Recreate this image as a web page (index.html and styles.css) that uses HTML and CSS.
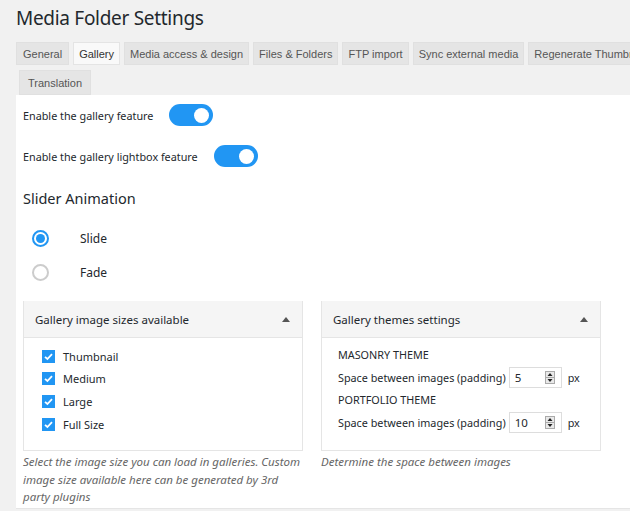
FILE: index.html
```html
<!DOCTYPE html>
<html lang="en">
<head>
  <meta charset="UTF-8" />
  <title>Media Folder Settings</title>
  <link rel="stylesheet" href="styles.css">
</head>
<body>
  <h1 class="page-title">Media Folder Settings</h1>

  <nav class="tabs">
    <a class="tab">General</a>
    <a class="tab active">Gallery</a>
    <a class="tab">Media access &amp; design</a>
    <a class="tab">Files &amp; Folders</a>
    <a class="tab">FTP import</a>
    <a class="tab">Sync external media</a>
    <a class="tab">Regenerate Thumbnails</a>
    <a class="tab tab-wrap">Translation</a>
  </nav>

  <div class="panel">
    <div class="switch-row">
      <label>Enable the gallery feature</label>
      <span class="switch"><span class="knob"></span></span>
    </div>
    <div class="switch-row second">
      <label>Enable the gallery lightbox feature</label>
      <span class="switch"><span class="knob"></span></span>
    </div>

    <h2 class="section-title">Slider Animation</h2>

    <div class="radio-row">
      <span class="radio checked"></span>
      <span>Slide</span>
    </div>
    <div class="radio-row">
      <span class="radio"></span>
      <span>Fade</span>
    </div>

    <div class="boxes">
      <div class="box-col">
        <div class="postbox">
          <div class="postbox-head">
            <span>Gallery image sizes available</span>
            <span class="arrow"></span>
          </div>
          <div class="postbox-body sizes">
            <div class="check-row"><span class="check"><svg viewBox="0 0 13 13" width="13" height="13"><path d="M3 6.8 L5.4 9 L10 4.2" fill="none" stroke="#fff" stroke-width="1.8"/></svg></span>Thumbnail</div>
            <div class="check-row"><span class="check"><svg viewBox="0 0 13 13" width="13" height="13"><path d="M3 6.8 L5.4 9 L10 4.2" fill="none" stroke="#fff" stroke-width="1.8"/></svg></span>Medium</div>
            <div class="check-row"><span class="check"><svg viewBox="0 0 13 13" width="13" height="13"><path d="M3 6.8 L5.4 9 L10 4.2" fill="none" stroke="#fff" stroke-width="1.8"/></svg></span>Large</div>
            <div class="check-row"><span class="check"><svg viewBox="0 0 13 13" width="13" height="13"><path d="M3 6.8 L5.4 9 L10 4.2" fill="none" stroke="#fff" stroke-width="1.8"/></svg></span>Full Size</div>
          </div>
        </div>
        <p class="desc">Select the image size you can load in galleries. Custom image size available here can be generated by 3rd party plugins</p>
      </div>

      <div class="box-col">
        <div class="postbox">
          <div class="postbox-head">
            <span>Gallery themes settings</span>
            <span class="arrow"></span>
          </div>
          <div class="postbox-body themes">
            <div class="theme-name">MASONRY THEME</div>
            <div class="field-row">
              <span>Space between images (padding)</span>
              <span class="number"><span>5</span><svg class="spin" viewBox="0 0 10 13" width="10" height="13"><rect x="0.5" y="0.5" width="9" height="12" fill="#e9e9e9" stroke="#aaa"/><line x1="1" y1="6.5" x2="9" y2="6.5" stroke="#aaa"/><path d="M2.5 5 L5 2 L7.5 5 Z M2.5 8 L5 11 L7.5 8 Z" fill="#222"/></svg></span>
              <span class="unit">px</span>
            </div>
            <div class="theme-name">PORTFOLIO THEME</div>
            <div class="field-row">
              <span>Space between images (padding)</span>
              <span class="number"><span>10</span><svg class="spin" viewBox="0 0 10 13" width="10" height="13"><rect x="0.5" y="0.5" width="9" height="12" fill="#e9e9e9" stroke="#aaa"/><line x1="1" y1="6.5" x2="9" y2="6.5" stroke="#aaa"/><path d="M2.5 5 L5 2 L7.5 5 Z M2.5 8 L5 11 L7.5 8 Z" fill="#222"/></svg></span>
              <span class="unit">px</span>
            </div>
          </div>
        </div>
        <p class="desc">Determine the space between images</p>
      </div>
    </div>
  </div>
</body>
</html>
```

FILE: styles.css
```css
body {
  margin: 0;
  background: #f1f1f1;
  color: #23282d;
  font-family: "Noto Sans", "Open Sans", sans-serif;
  font-size: 10.8px;
  overflow: hidden;
}
.page-title {
  margin: 0;
  padding: 6px 0 0 16px;
  height: 42px;
  box-sizing: border-box;
  font-size: 19px;
  letter-spacing: -0.3px;
  font-weight: 400;
  line-height: 24px;
}
.tabs {
  display: flex;
  flex-wrap: wrap;
  gap: 5px 4px;
  padding-left: 16px;
  width: 700px;
}
.tab {
  display: block;
  height: 23px;
  line-height: 22px;
  padding: 0 5px;
  box-sizing: border-box;
  background: #e5e5e5;
  border: 1px solid #e0e0e0;
  font-family: "Liberation Sans", Arial, sans-serif;
  font-size: 11px;
  color: #555;
  white-space: nowrap;
}
.tab:first-child {
  padding: 0 6px;
}
.tab.active {
  background: #f9f9f9;
  border-color: #e4e4e4;
  color: #333;
}
.tab-wrap {
  margin-left: 3px;
  height: 25px;
  line-height: 24px;
  padding: 0 8px;
}
.panel {
  background: #fff;
  margin-left: 16px;
  height: 414px;
  border-bottom: 1px solid #e5e5e5;
  padding: 9px 0 0 7px;
  box-sizing: border-box;
}
.switch-row {
  display: flex;
  align-items: center;
  height: 22px;
}
.switch-row.second {
  margin-top: 19px;
}
.switch-row label {
  margin-right: 16px;
}
.switch {
  width: 44px;
  height: 22px;
  border-radius: 11px;
  background: #2196f3;
  display: flex;
  align-items: center;
  justify-content: flex-end;
  padding-right: 4px;
  box-sizing: border-box;
}
.knob {
  width: 15px;
  height: 15px;
  border-radius: 50%;
  background: #fff;
}
.section-title {
  margin: 21px 0 0;
  font-size: 14.5px;
  font-weight: 400;
  line-height: 20px;
}
.radio-row {
  display: flex;
  align-items: center;
  height: 18px;
  margin-top: 21px;
  padding-left: 9px;
  font-size: 12px;
}
.radio-row + .radio-row {
  margin-top: 16px;
}
.radio {
  width: 17px;
  height: 17px;
  border-radius: 50%;
  border: 2px solid #ccc;
  box-sizing: border-box;
  margin-right: 31px;
  display: flex;
  align-items: center;
  justify-content: center;
}
.radio.checked {
  border-color: #2196f3;
}
.radio.checked::after {
  content: "";
  width: 9px;
  height: 9px;
  border-radius: 50%;
  background: #2196f3;
}
.boxes {
  display: grid;
  grid-template-columns: 280px 280px;
  gap: 18px;
  margin-top: 20px;
}
.postbox {
  border: 1px solid #e5e5e5;
  border-top: 0;
}
.postbox-head {
  display: flex;
  justify-content: space-between;
  align-items: center;
  height: 36px;
  background: #f5f5f5;
  border-bottom: 1px solid #e5e5e5;
  padding: 0 11px;
  font-size: 11.5px;
}
.arrow {
  width: 0;
  height: 0;
  border-left: 4px solid transparent;
  border-right: 4px solid transparent;
  border-bottom: 5px solid #555;
  margin-right: 1px;
}
.postbox-body {
  height: 112px;
  box-sizing: border-box;
}
.sizes {
  padding: 7px 0 0 18px;
}
.check-row {
  display: flex;
  align-items: center;
  height: 22.6px;
  font-size: 11px;
}
.check {
  width: 13px;
  height: 13px;
  background: #2196f3;
  margin-right: 8px;
  display: flex;
}
.themes {
  padding: 8px 0 0 16px;
}
.theme-name {
  height: 18px;
  line-height: 18px;
}
.field-row {
  display: flex;
  align-items: center;
  height: 27px;
}
.number {
  display: flex;
  align-items: center;
  justify-content: space-between;
  width: 53px;
  height: 21px;
  border: 1px solid #ddd;
  box-sizing: border-box;
  margin-left: 3px;
  padding: 0 6px 0 5px;
  font-size: 11.5px;
}
.unit {
  margin-left: 6px;
}
.desc {
  margin: 2px 0 0;
  font-style: italic;
  font-size: 11.5px;
  line-height: 17.5px;
  color: #666;
}
```
